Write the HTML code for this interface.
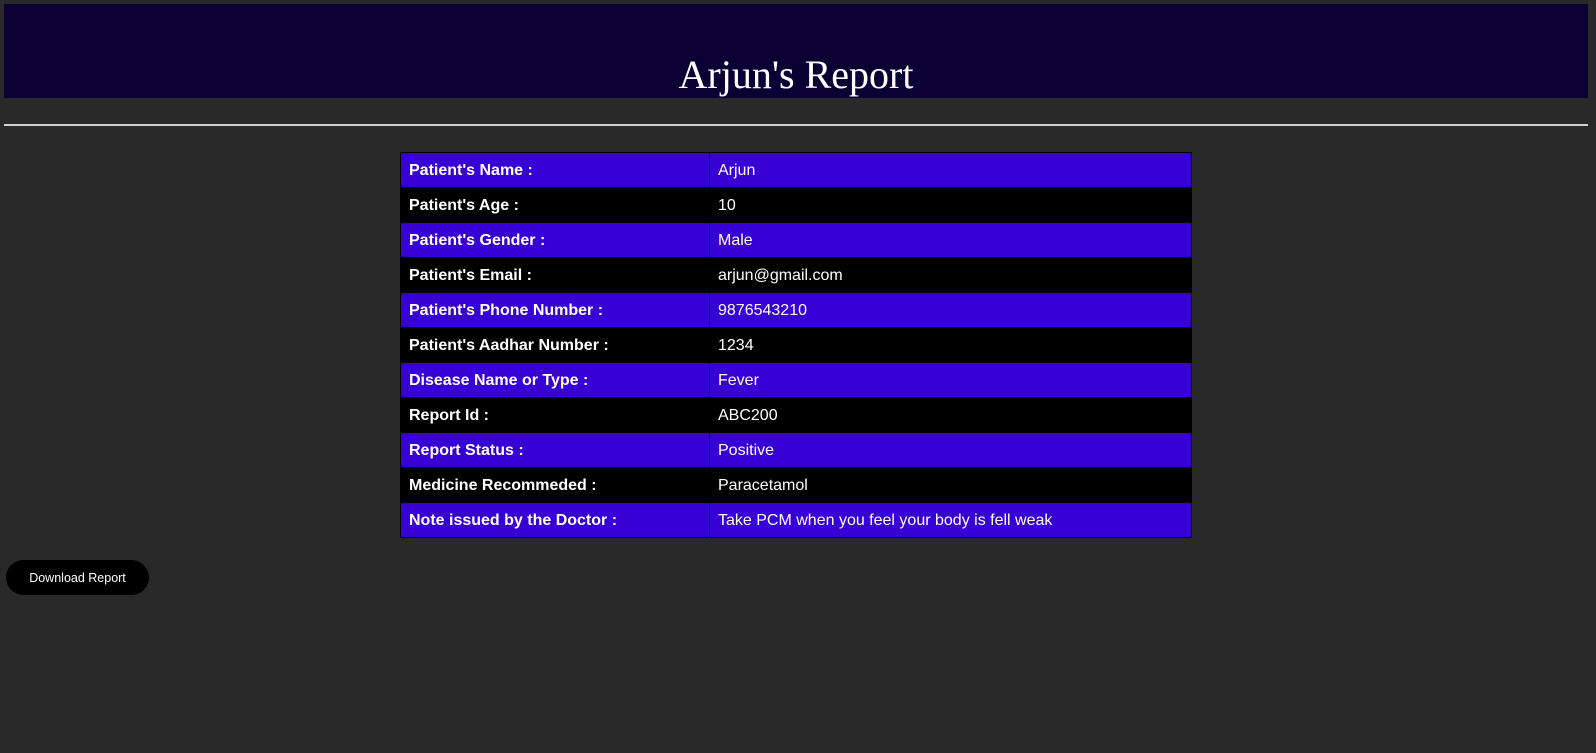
<!DOCTYPE html>
<html><head><style>
html,body{margin:0;padding:0;background:#292929;width:1596px;height:753px;overflow:hidden}
.hdr{position:absolute;left:4px;top:4px;width:1584px;height:94px;background:#0b0033}
.hdr h1{position:absolute;left:0;right:0;top:47px;margin:0;text-align:center;font-family:"Liberation Serif",serif;font-weight:normal;font-size:40px;line-height:48px;color:#fff}
.hr{position:absolute;left:4px;top:124px;width:1584px;height:2px;background:#d0d0d0}
table{position:absolute;left:400px;top:152px;width:792px;border-collapse:collapse;font-family:"Liberation Sans",Arial,sans-serif;font-size:16px;color:#fff}
td{border:1px solid #000;height:34.7px;padding:2px 8px 0;box-sizing:border-box;line-height:32px;vertical-align:middle}
td:first-child{width:309px;font-weight:bold}
tr:nth-child(odd){background:#3700d4}
tr:nth-child(even){background:#000}
.btn{position:absolute;left:6px;top:560px;width:143px;height:35px;border-radius:17.5px;background:#000;color:#fff;font-family:"Liberation Sans",Arial,sans-serif;font-size:12.5px;line-height:37px;text-align:center}
</style></head><body>
<div class="hdr"><h1>Arjun's Report</h1></div>
<div class="hr"></div>
<table>
<tr><td>Patient's Name :</td><td>Arjun</td></tr>
<tr><td>Patient's Age :</td><td>10</td></tr>
<tr><td>Patient's Gender :</td><td>Male</td></tr>
<tr><td>Patient's Email :</td><td>arjun@gmail.com</td></tr>
<tr><td>Patient's Phone Number :</td><td>9876543210</td></tr>
<tr><td>Patient's Aadhar Number :</td><td>1234</td></tr>
<tr><td>Disease Name or Type :</td><td>Fever</td></tr>
<tr><td>Report Id :</td><td>ABC200</td></tr>
<tr><td>Report Status :</td><td>Positive</td></tr>
<tr><td>Medicine Recommeded :</td><td>Paracetamol</td></tr>
<tr><td>Note issued by the Doctor :</td><td>Take PCM when you feel your body is fell weak</td></tr>
</table>
<div class="btn">Download Report</div>
</body></html>
